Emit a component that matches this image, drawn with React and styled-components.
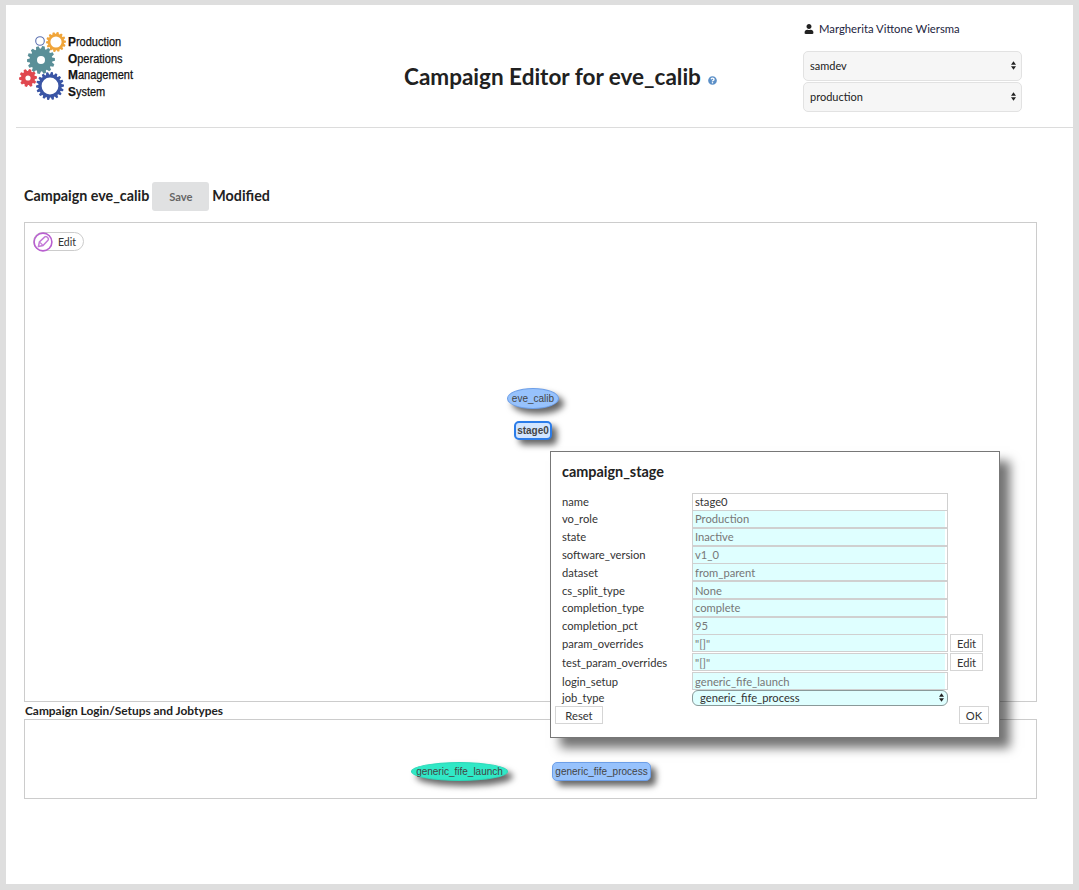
import React from 'react';
import styled, { createGlobalStyle } from 'styled-components';
import { FaUser, FaQuestionCircle } from 'react-icons/fa';

const GlobalStyle = createGlobalStyle`
  html, body {
    margin: 0;
    padding: 0;
    background: #dedede;
  }
  body {
    font-family: Lato, 'Liberation Sans', sans-serif;
    color: #212121;
  }
`;

const Page = styled.div`
  box-sizing: border-box;
  margin: 5px 6px 0 6px;
  width: 1067px;
  height: 879px;
  background: #fff;
`;

const Header = styled.header`
  display: flex;
  box-sizing: border-box;
  height: 123px;
  margin-left: 10px;
  border-bottom: 1px solid #dcdcdc;
`;

const LogoWrap = styled.div`
  display: flex;
  width: 270px;
  padding: 24px 0 0 2px;
  box-sizing: border-box;
`;

const LogoText = styled.div`
  font-family: 'Liberation Sans', Arial, sans-serif;
  font-size: 12.5px;
  line-height: 16.6px;
  -webkit-text-stroke: 0.25px #111;
  color: #111;
  margin: 5px 0 0 -24px;
  transform: scaleX(0.88);
  transform-origin: left top;
  white-space: nowrap;
  b { font-size: 13.5px; }
`;

const TitleWrap = styled.div`
  width: 517px;
  padding: 59px 0 0 118px;
  box-sizing: border-box;
  white-space: nowrap;
`;

const Title = styled.h1`
  display: inline;
  margin: 0;
  font-size: 22.5px;
  line-height: 26px;
  font-weight: 700;
  color: #212121;
`;

const HelpIcon = styled(FaQuestionCircle)`
  font-size: 9px;
  color: #5b8fc7;
  margin-left: 7px;
`;

const UserBox = styled.div`
  padding: 17px 0 0 0;
`;

const UserName = styled.div`
  display: flex;
  align-items: center;
  gap: 5px;
  padding-left: 1px;
  font-size: 11.3px;
  line-height: 14px;
  color: #1c2440;
  margin-bottom: 15px;
`;

const ExpSelect = styled.div`
  display: flex;
  align-items: center;
  justify-content: space-between;
  box-sizing: border-box;
  width: 219px;
  height: 30px;
  margin-bottom: 1px;
  padding: 0 5px 2px 6px;
  font-size: 11px;
  color: #222;
  background: #f6f6f6;
  border: 1px solid #e2e2e2;
  border-radius: 5px;
`;

const Arrows = () => (
  <svg width="5" height="9" viewBox="0 0 6 10">
    <path d="M3 0 L6 4 H0 Z M3 10 L0 6 H6 Z" fill={'#222'} />
  </svg>
);

const Main = styled.main`
  padding: 54px 0 0 18px;
`;

const CampaignRow = styled.div`
  display: flex;
  align-items: center;
  gap: 3px;
  height: 29px;
  margin-bottom: 11px;
  padding-bottom: 2px;
  box-sizing: border-box;
  font-size: 14.3px;
  font-weight: 700;
  color: #222;
`;

const SaveButton = styled.div`
  display: flex;
  align-items: center;
  justify-content: center;
  width: 57px;
  height: 29px;
  margin-bottom: -2px;
  background: #e0e1e2;
  border-radius: 3px;
  color: #666;
  font-size: 11.2px;
  font-weight: 700;
`;

const GraphBox = styled.div`
  position: relative;
  box-sizing: border-box;
  width: 1013px;
  height: 480px;
  border: 1px solid #ccc;
`;

const EditPill = styled.div`
  position: absolute;
  left: 8px;
  top: 9px;
  display: flex;
  align-items: center;
  gap: 5px;
  box-sizing: border-box;
  width: 51px;
  height: 19px;
  border: 1px solid #ccc;
  border-radius: 10px;
  font-size: 10.5px;
  color: #333;
`;

const Node = styled.div`
  position: absolute;
  left: ${(p) => p.$x}px;
  top: ${(p) => p.$y}px;
  display: flex;
  align-items: center;
  justify-content: center;
  box-sizing: border-box;
  width: ${(p) => p.$w}px;
  height: ${(p) => p.$h}px;
  font-family: 'Liberation Sans', Arial, sans-serif;
  font-size: 10px;
  font-weight: ${(p) => (p.$bold ? 700 : 400)};
  color: #444;
  background: ${(p) => p.$bg};
  border: ${(p) => (p.$bold ? 2 : 1)}px solid ${(p) => p.$line};
  border-radius: ${(p) => (p.$ellipse ? '50%' : '5px')};
  box-shadow: 5px 5px 6px rgba(0, 0, 0, 0.6);
  white-space: nowrap;
`;

const SectionTitle = styled.div`
  margin-top: 2px;
  font-size: 11.9px;
  line-height: 14px;
  font-weight: 700;
  color: #222;
  padding-left: 1px;
`;

const JobBox = styled.div`
  position: relative;
  box-sizing: border-box;
  width: 1013px;
  height: 80px;
  margin-top: 1px;
  border: 1px solid #ccc;
`;

const Dialog = styled.div`
  position: absolute;
  left: 550px;
  top: 451px;
  box-sizing: border-box;
  width: 450px;
  height: 287px;
  padding: 11px 11px 0 11px;
  background: #fff;
  border: 1px solid #777;
  box-shadow: 10px 10px 10px rgba(0, 0, 0, 0.55);
  font-size: 11.2px;
  color: #333;
  z-index: 3;
`;

const DialogTitle = styled.h3`
  margin: 0 0 13px;
  font-size: 14.4px;
  line-height: 17px;
  font-weight: 700;
  color: #222;
`;

const FormRow = styled.div`
  display: flex;
  align-items: center;
  height: ${(p) => p.$h || 17.8}px;
`;

const FieldLabel = styled.div`
  width: 130px;
  flex: none;
`;

const FieldValue = styled.div`
  display: flex;
  align-items: center;
  flex: none;
  box-sizing: border-box;
  width: 256px;
  height: 18px;
  padding: 0 2px;
  background: ${(p) => (p.$plain ? '#fff' : '#dfffff')};
  border: 1px solid #d0d0d0;
  box-shadow: inset -2px 0 0 #fff;
  color: ${(p) => (p.$plain ? '#333' : '#777')};
`;

const SelectValue = styled.div`
  display: flex;
  align-items: center;
  justify-content: space-between;
  flex: none;
  box-sizing: border-box;
  width: 256px;
  height: 16px;
  padding: 0 3px 0 7px;
  background: #dfffff;
  border: 1px solid #8a9a9a;
  border-radius: 6px;
  color: #333;
`;

const SmallButton = styled.div`
  display: flex;
  align-items: center;
  justify-content: center;
  flex: none;
  box-sizing: border-box;
  width: ${(p) => p.$w}px;
  height: 18px;
  margin-left: ${(p) => p.$ml || 0}px;
  background: #fff;
  border: 1px solid #d5d5d5;
  color: #333;
`;

const ButtonRow = styled.div`
  display: flex;
  justify-content: space-between;
  margin: 1px -1px 0 -7px;
`;

// toothed wheel as one path, the hole cut out with evenodd
const gearPath = (cx, cy, outer, root, hole, teeth) => {
  const pts = [];
  const step = (Math.PI * 2) / teeth;
  for (let i = 0; i < teeth; i++) {
    const a = i * step;
    [
      [root, -0.5],
      [outer, -0.3],
      [outer, 0.1],
      [root, 0.3],
    ].forEach(([r, k]) => {
      const t = a + k * step;
      pts.push(`${(cx + r * Math.cos(t)).toFixed(2)} ${(cy + r * Math.sin(t)).toFixed(2)}`);
    });
  }
  const ring = `M${cx - hole} ${cy}a${hole} ${hole} 0 1 0 ${hole * 2} 0a${hole} ${hole} 0 1 0 ${-hole * 2} 0Z`;
  return `M${pts.join('L')}Z${ring}`;
};

const Gear = ({ cx, cy, outer, root, hole, teeth, color }) => (
  <path d={gearPath(cx, cy, outer, root, hole, teeth)} fill={color} fillRule="evenodd" />
);

const LogoGears = () => (
  <svg width="74" height="74" viewBox="0 0 74 74" style={{ flex: 'none' }}>
    <circle cx="22" cy="12" r="4.3" fill="none" stroke="#5a6fb0" strokeWidth="1.1" />
    <Gear cx={38} cy={13} outer={10} root={8.2} hole={5.6} teeth={14} color="#f0a53a" />
    <Gear cx={23} cy={31} outer={14} root={11.4} hole={4} teeth={14} color="#5a8f98" />
    <Gear cx={10} cy={49} outer={9} root={7} hole={2.6} teeth={10} color="#e0474f" />
    <Gear cx={32} cy={57} outer={14} root={11.6} hole={8.4} teeth={18} color="#3a55a5" />
  </svg>
);

const fields = [
  ['name', 'stage0', true],
  ['vo_role', 'Production'],
  ['state', 'Inactive'],
  ['software_version', 'v1_0'],
  ['dataset', 'from_parent'],
  ['cs_split_type', 'None'],
  ['completion_type', 'complete'],
  ['completion_pct', '95'],
];

export default function App() {
  return (
    <>
      <GlobalStyle />
      <Page>
        <Header>
          <LogoWrap>
            <LogoGears />
            <LogoText>
              <div><b>P</b>roduction</div>
              <div><b>O</b>perations</div>
              <div><b>M</b>anagement</div>
              <div><b>S</b>ystem</div>
            </LogoText>
          </LogoWrap>
          <TitleWrap>
            <Title>Campaign Editor for eve_calib</Title>
            <HelpIcon />
          </TitleWrap>
          <UserBox>
            <UserName>
              <FaUser size={10} color="#222" />
              Margherita Vittone Wiersma
            </UserName>
            <ExpSelect>samdev<Arrows /></ExpSelect>
            <ExpSelect>production<Arrows /></ExpSelect>
          </UserBox>
        </Header>
        <Main>
          <CampaignRow>
            Campaign eve_calib
            <SaveButton>Save</SaveButton>
            Modified
          </CampaignRow>
          <GraphBox>
            <EditPill>
              <svg width="20" height="20" viewBox="0 0 20 20" style={{ marginLeft: -1 }}>
                <circle cx="10" cy="10" r="8.9" fill="#fff" stroke="#b95fd0" strokeWidth="1.6" />
                <path d="M5.4 14.6 L6.4 10 L11.8 4.9 Q13 4 14 5 L15 6 Q16 7 15 8.2 L10 13.6 Z" fill="none" stroke="#c47ad8" strokeWidth="1.5" />
                <path d="M7 10.4 L9.6 13" stroke="#c47ad8" strokeWidth="1.2" />
              </svg>
              Edit
            </EditPill>
            <Node $x={482} $y={165} $w={52} $h={21} $ellipse $bg="#97c2fc" $line="#6d9fe8">eve_calib</Node>
            <Node $x={489} $y={198} $w={38} $h={19} $bold $bg="#d2e5ff" $line="#2b7ce9">stage0</Node>
          </GraphBox>
          <SectionTitle>Campaign Login/Setups and Jobtypes</SectionTitle>
          <JobBox>
            <Node $x={386} $y={42} $w={97} $h={19} $ellipse $bg="#30e8c6" $line="#2bd8b8">generic_fife_launch</Node>
            <Node $x={527} $y={42} $w={99} $h={19} $bg="#97c2fc" $line="#6d9fe8">generic_fife_process</Node>
          </JobBox>
        </Main>
        <Dialog>
          <DialogTitle>campaign_stage</DialogTitle>
          {fields.map(([label, value, plain], i) => (
            <FormRow key={label} $h={i === 0 ? 17 : undefined}>
              <FieldLabel>{label}</FieldLabel>
              <FieldValue $plain={plain}>{value}</FieldValue>
            </FormRow>
          ))}
          <FormRow>
            <FieldLabel>param_overrides</FieldLabel>
            <FieldValue>"[]"</FieldValue>
            <SmallButton $w={33} $ml={2}>Edit</SmallButton>
          </FormRow>
          <FormRow $h={20}>
            <FieldLabel>test_param_overrides</FieldLabel>
            <FieldValue>"[]"</FieldValue>
            <SmallButton $w={33} $ml={2}>Edit</SmallButton>
          </FormRow>
          <FormRow $h={17.5}>
            <FieldLabel>login_setup</FieldLabel>
            <FieldValue>generic_fife_launch</FieldValue>
          </FormRow>
          <FormRow $h={15.5}>
            <FieldLabel>job_type</FieldLabel>
            <SelectValue>generic_fife_process<Arrows /></SelectValue>
          </FormRow>
          <ButtonRow>
            <SmallButton $w={48}>Reset</SmallButton>
            <SmallButton $w={30}>OK</SmallButton>
          </ButtonRow>
        </Dialog>
      </Page>
    </>
  );
}
